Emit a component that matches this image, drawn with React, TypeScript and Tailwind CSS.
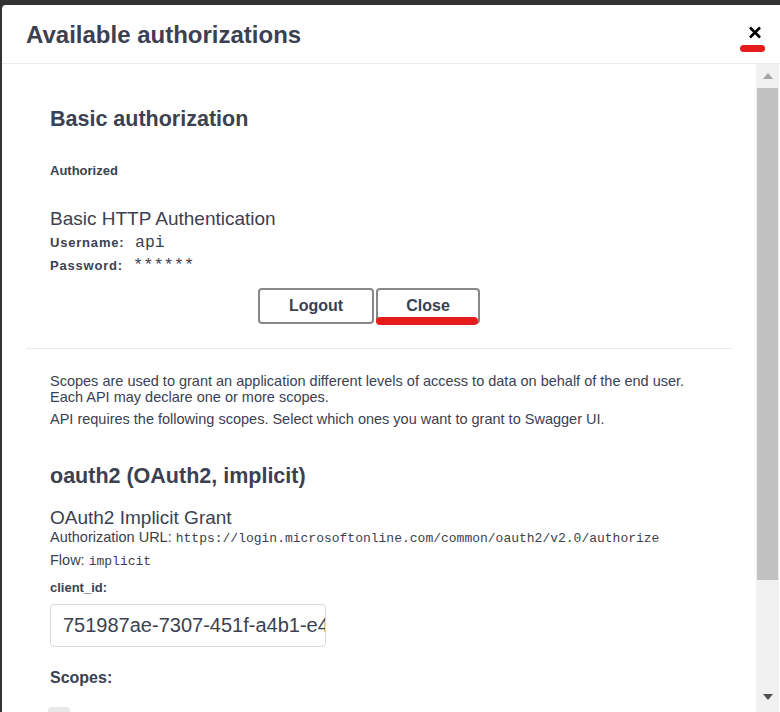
export default function App() {
  const sans = { fontFamily: '"Liberation Sans", Arial, sans-serif' };
  const mono = { fontFamily: '"Liberation Mono", monospace' };
  return (
    <div className="w-[780px] h-[712px] bg-[#333333] pt-[5px] pl-[2px] overflow-hidden" style={sans}>
      <div className="relative w-full h-[707px] bg-white rounded-tl-[4px] flex flex-col text-[#3b4151]">
        {/* Header */}
        <div className="h-[59px] shrink-0 border-b border-[#ebebeb] flex items-center justify-between pl-[24px] pr-[18px]">
          <h3 className="text-[24px] font-bold leading-none -mb-[2px]">Available authorizations</h3>
          <button className="text-black leading-none -mb-[2px] -mt-[6px]">
            <svg width="14" height="13" viewBox="0 0 14 13">
              <path d="M2 1.5 L12 11.5 M12 1.5 L2 11.5" stroke="#000" strokeWidth="2.6" />
            </svg>
          </button>
        </div>
        {/* Annotation under close icon */}
        <div className="absolute left-[738px] top-[40px] w-[25px] h-[7px] rounded-full bg-[#e61c1c]" />

        {/* Body */}
        <div className="flex flex-1 min-h-0">
          <div className="flex-1 overflow-hidden px-[24px]">
            {/* Basic auth */}
            <div className="border-b border-[#ebebeb] px-[24px] pt-[45px] pb-[24px]">
              <h4 className="text-[21.5px] font-bold leading-none">Basic authorization</h4>
              <h6 className="text-[13px] font-bold mt-[33px] leading-none">Authorized</h6>
              <p className="text-[19px] mt-[32px] leading-none">Basic HTTP Authentication</p>
              <div className="flex items-baseline mt-[7px] leading-none">
                <label className="text-[13px] font-bold tracking-[0.8px] w-[85px]">Username:</label>
                <code className="text-[16.5px]" style={mono}>api</code>
              </div>
              <div className="flex items-baseline mt-[6px] leading-none">
                <label className="text-[13px] font-bold tracking-[0.8px] w-[83px]">Password:</label>
                <code className="text-[17px]" style={mono}>******</code>
              </div>
              <div className="flex gap-[2px] ml-[208px] mt-[14px]">
                <button className="w-[116px] h-[36px] border-2 border-[#888888] rounded-[4px] text-[16px] font-bold">Logout</button>
                <div className="relative">
                  <button className="w-[104px] h-[36px] border-2 border-[#888888] rounded-[4px] text-[16px] font-bold">Close</button>
                  <div className="absolute left-0 top-[29px] w-[102px] h-[8px] rounded-full bg-[#e61c1c]" />
                </div>
              </div>
            </div>

            {/* OAuth2 */}
            <div className="px-[24px] pt-[24px]">
              <p className="text-[14.5px] leading-[16px]">
                Scopes are used to grant an application different levels of access to data on behalf of the end user.
                <br />
                Each API may declare one or more scopes.
              </p>
              <p className="text-[14.5px] leading-[16px] mt-[6px]">
                API requires the following scopes. Select which ones you want to grant to Swagger UI.
              </p>
              <h4 className="text-[21.5px] font-bold leading-none mt-[39px]">oauth2 (OAuth2, implicit)</h4>
              <p className="text-[19px] leading-none mt-[20px]">OAuth2 Implicit Grant</p>
              <p className="text-[14.5px] leading-none mt-[3px]">
                Authorization URL:{" "}
                <code className="text-[13px]" style={mono}>
                  https://login.microsoftonline.com/common/oauth2/v2.0/authorize
                </code>
              </p>
              <p className="text-[14.5px] leading-none mt-[8px]">
                Flow:{" "}
                <code className="text-[13px]" style={mono}>implicit</code>
              </p>
              <label className="block text-[13px] font-bold leading-none mt-[13px]">client_id:</label>
              <div className="mt-[10px] w-[276px] h-[43px] border border-[#d9d9d9] rounded-[4px] flex items-center px-[12px] overflow-hidden">
                <span className="text-[20px] whitespace-nowrap">751987ae-7307-451f-a4b1-e4d8d62e1c4a</span>
              </div>
              <h6 className="text-[16px] font-bold leading-none mt-[23px]">Scopes:</h6>
              <div className="flex items-center gap-[10px] mt-[21px] -ml-[2px]">
                <div className="w-[22px] h-[22px] rounded-[4px] bg-[#e8e8e8] shrink-0" />
                <code className="text-[12px] whitespace-nowrap" style={mono}>
                  api://751987ae-7307-451f-a4b1-e4d8d62e1c4a/.default
                </code>
              </div>
            </div>
          </div>

          {/* Scrollbar */}
          <div className="w-[23px] shrink-0 bg-[#f1f1f1] flex flex-col items-center mr-[1px]">
            <div className="h-[24px] w-full flex items-center justify-center">
              <svg width="10" height="6" viewBox="0 0 10 6"><path d="M5 0 L10 6 L0 6 Z" fill="#a3a3a3" /></svg>
            </div>
            <div className="w-[21px] h-[492px] bg-[#c1c1c1]" />
            <div className="flex-1" />
            <div className="h-[24px] w-full flex items-center justify-center pb-[6px]">
              <svg width="10" height="6" viewBox="0 0 10 6"><path d="M0 0 L10 0 L5 6 Z" fill="#505050" /></svg>
            </div>
          </div>
        </div>
      </div>
    </div>
  );
}
